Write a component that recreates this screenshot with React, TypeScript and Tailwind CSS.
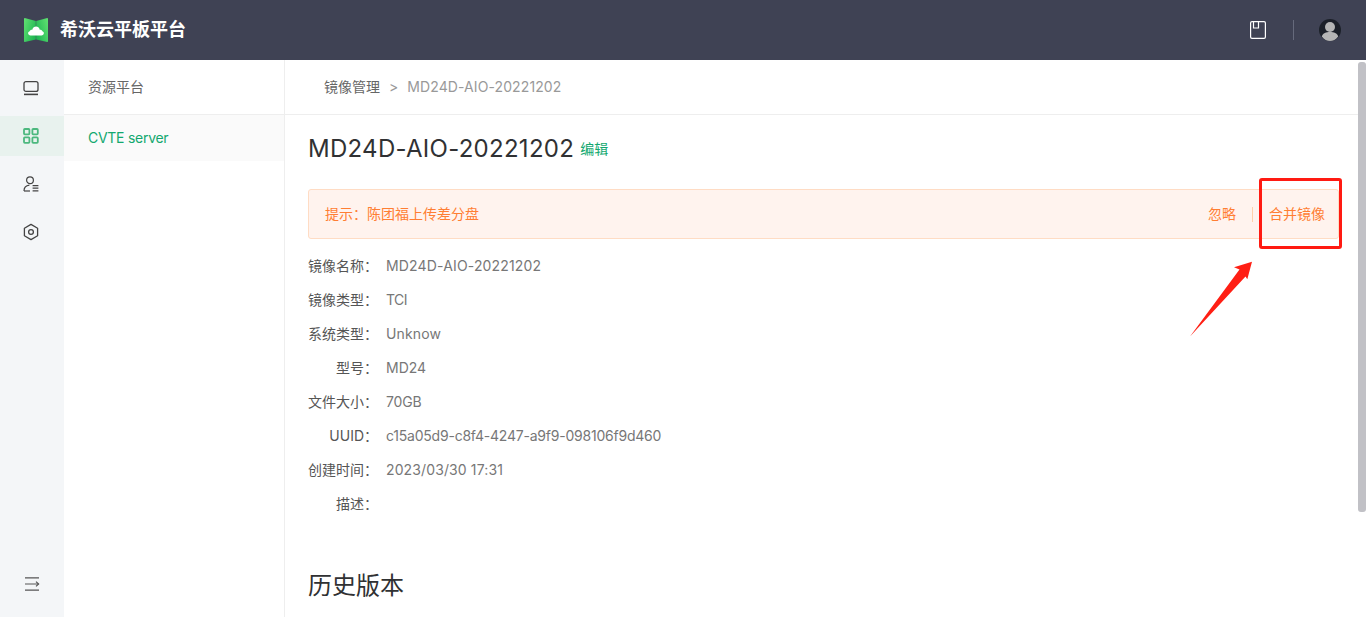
import type { ReactNode } from "react";

const fontStack = '"Inter", "Noto Sans CJK SC", sans-serif';

const details: { label: string; value: string; tracking?: string }[] = [
  { label: "镜像名称", value: "MD24D-AIO-20221202", tracking: "tracking-[0.16px]" },
  { label: "镜像类型", value: "TCI", tracking: "tracking-[-0.6px]" },
  { label: "系统类型", value: "Unknow", tracking: "tracking-[0.15px]" },
  { label: "型号", value: "MD24" },
  { label: "文件大小", value: "70GB", tracking: "tracking-[-0.2px]" },
  { label: "UUID", value: "c15a05d9-c8f4-4247-a9f9-098106f9d460", tracking: "tracking-[-0.22px]" },
  { label: "创建时间", value: "2023/03/30 17:31", tracking: "tracking-[0.12px]" },
  { label: "描述", value: "" },
];

function Logo() {
  return (
    <svg width="24" height="24" viewBox="0 0 24 24">
      <defs>
        <linearGradient id="logoLeft" x1="0" y1="0" x2="1" y2="0.6">
          <stop offset="0" stopColor="#62e272" />
          <stop offset="1" stopColor="#22b854" />
        </linearGradient>
        <linearGradient id="logoRight" x1="1" y1="0" x2="0" y2="0.6">
          <stop offset="0" stopColor="#62e272" />
          <stop offset="1" stopColor="#22b854" />
        </linearGradient>
      </defs>
      <path d="M0.8 0 L11.8 3 V21.4 L0.8 24 C0.3 24 0 23.7 0 23.2 V0.8 C0 0.3 0.3 0 0.8 0 Z" fill="url(#logoLeft)" />
      <path d="M23.2 0 L12.2 3 V21.4 L23.2 24 C23.7 24 24 23.7 24 23.2 V0.8 C24 0.3 23.7 0 23.2 0 Z" fill="url(#logoRight)" />
      <path d="M6.5 17.4 C3.8 17.4 3.2 14 5.6 13.3 C6 11.9 7.4 11.4 8.3 11.8 C9.2 7.6 14.8 7.4 15.8 11.8 C16.8 11.5 18.2 12.2 18.4 13.3 C20.8 14 20.2 17.4 17.5 17.4 Z" fill="#ffffff" />
    </svg>
  );
}

function RailItem({ active, children }: { active?: boolean; children: ReactNode }) {
  return (
    <div className={`flex h-10 w-16 items-center justify-center pr-[2px] ${active ? "bg-[#e8f2ee]" : ""}`}>
      {children}
    </div>
  );
}

function Rail() {
  return (
    <aside className="flex w-16 shrink-0 flex-col bg-[#f4f6f8] pt-2">
      <div className="flex flex-col gap-2">
        <RailItem>
          <svg width="18" height="18" viewBox="0 0 18 18" fill="none" stroke="#444" strokeWidth="1.3">
            <rect x="2" y="2.6" width="14" height="9.8" rx="2" />
            <path d="M2 15.4 H16" strokeWidth="1.6" />
          </svg>
        </RailItem>
        <RailItem active>
          <svg width="18" height="18" viewBox="0 0 18 18" fill="none" stroke="#4cb87e" strokeWidth="1.8">
            <rect x="2" y="2" width="5.4" height="5.4" rx="0.8" />
            <rect x="10.4" y="2" width="5.4" height="5.4" rx="0.8" />
            <rect x="2" y="10.4" width="5.4" height="5.4" rx="0.8" />
            <rect x="10.4" y="10.4" width="5.4" height="5.4" rx="0.8" />
          </svg>
        </RailItem>
        <RailItem>
          <svg width="18" height="18" viewBox="0 0 18 18" fill="none" stroke="#444" strokeWidth="1.2">
            <circle cx="8" cy="5.2" r="3.4" />
            <path d="M2 16 C2 12.6 4 10.6 7.4 10.2" />
            <path d="M2 16 H8" />
            <path d="M10.6 10.6 H16.4 M10.6 13.2 H16.4 M10.6 15.8 H16.4" />
          </svg>
        </RailItem>
        <RailItem>
          <svg width="18" height="18" viewBox="0 0 18 18" fill="none" stroke="#444" strokeWidth="1.3">
            <path d="M9 1.4 L15.6 5.2 V12.8 L9 16.6 L2.4 12.8 V5.2 Z" strokeLinejoin="round" />
            <circle cx="9" cy="9" r="2.4" />
          </svg>
        </RailItem>
      </div>
      <div className="mt-auto flex h-[50px] items-start justify-center pt-[9px]">
        <svg width="16" height="16" viewBox="0 0 16 16" fill="none" stroke="#555" strokeWidth="1.2">
          <path d="M1 1.8 H15 M1 14.2 H15 M1 8 H14.6" />
          <path d="M12 5.6 L14.6 8 L12 10.4" />
        </svg>
      </div>
    </aside>
  );
}

function SubNav() {
  return (
    <nav className="w-[221px] shrink-0 border-r border-[#eeeeee] bg-white text-sm">
      <div className="flex h-[55px] items-center border-b border-[#eeeeee] pl-6 text-[#666666]">资源平台</div>
      <div className="flex h-[46px] items-center bg-[#fafafa] pl-6 tracking-[-0.27px] text-[#12a86f]">CVTE server</div>
    </nav>
  );
}

function Annotation() {
  return (
    <>
      <div className="absolute left-[1259px] top-[178px] h-[71px] w-[83px] rounded-[3px] border-[3px] border-[#ff1a12]" />
      <svg className="absolute left-[1185px] top-[258px]" width="70" height="82" viewBox="0 0 70 82">
        <path d="M5 78.5 L54.5 11.5 L49 9.3 L67 3.7 L62.3 21.3 L60.5 18.5 Z" fill="#ff1f14" />
      </svg>
    </>
  );
}

export default function App() {
  return (
    <div className="relative flex h-[617px] w-[1366px] flex-col overflow-hidden bg-white" style={{ fontFamily: fontStack }}>
      <header className="flex h-[60px] shrink-0 items-center bg-[#3f4254] pl-6 pr-[25px]">
        <Logo />
        <span className="ml-3 text-lg font-bold text-white">希沃云平板平台</span>
        <div className="ml-auto flex items-center">
          <svg width="18" height="20" viewBox="0 0 18 20" fill="none" stroke="#ffffff" strokeWidth="1.2">
            <rect x="1.6" y="1.6" width="14.8" height="16.8" rx="1.4" />
            <path d="M4.5 1.6 V8 H9.5 V1.6" />
          </svg>
          <div className="ml-[26px] mr-[25px] h-5 w-px bg-[#666a7c]" />
          <svg width="22" height="22" viewBox="0 0 22 22">
            <circle cx="11" cy="11" r="11" fill="#1c2029" />
            <circle cx="11" cy="8" r="5" fill="#b5b5b5" />
            <path d="M2.8 17.4 C4 14 7 13 11 13 C15 13 18 14 19.2 17.4 C17 20.4 14 22 11 22 C8 22 5 20.4 2.8 17.4 Z" fill="#b5b5b5" />
          </svg>
        </div>
      </header>

      <div className="flex min-h-0 flex-1">
        <Rail />
        <SubNav />
        <main className="min-w-0 flex-1 text-sm">
          <div className="flex h-[55px] items-center border-b border-[#eeeeee] pl-[39px]">
            <span className="text-[#666666]">镜像管理</span>
            <span className="mx-[9px] text-[#999999]">&gt;</span>
            <span className="tracking-[0.1px] text-[#999999]">MD24D-AIO-20221202</span>
          </div>

          <div className="pl-[23px] pr-[19px]">
            <div className="mt-[16px] flex h-[36px] items-center">
              <h1 className="text-2xl tracking-[0.28px] text-[#303133]">MD24D-AIO-20221202</h1>
              <span className="ml-[6px] text-sm text-[#12a86f]">编辑</span>
            </div>

            <div className="mt-[22px] flex h-[50px] items-center rounded-[3px] border border-[#ffdcc4] bg-[#fff3ee] pl-4 pr-[13px] text-sm text-[#ff7e33]">
              <span>提示：陈团福上传差分盘</span>
              <span className="ml-auto">忽略</span>
              <span className="mx-4 h-[15px] w-px bg-[#ffcfa8]" />
              <span>合并镜像</span>
            </div>

            <dl className="mt-[10px]">
              {details.map((row) => (
                <div key={row.label} className="flex h-[34px] items-center">
                  <dt className="w-[70px] shrink-0 whitespace-nowrap text-right text-[#555555]">{row.label}：</dt>
                  <dd className={`ml-2 text-[#777777] ${row.tracking ?? ""}`}>{row.value}</dd>
                </div>
              ))}
            </dl>

            <h2 className="mt-[49px] text-2xl text-[#303133]">历史版本</h2>
          </div>
        </main>
        <div className="w-2 shrink-0 bg-white pt-[2px]">
          <div className="h-[450px] rounded-[3px] bg-[#c1c1c6]" />
        </div>
      </div>

      <Annotation />
    </div>
  );
}
